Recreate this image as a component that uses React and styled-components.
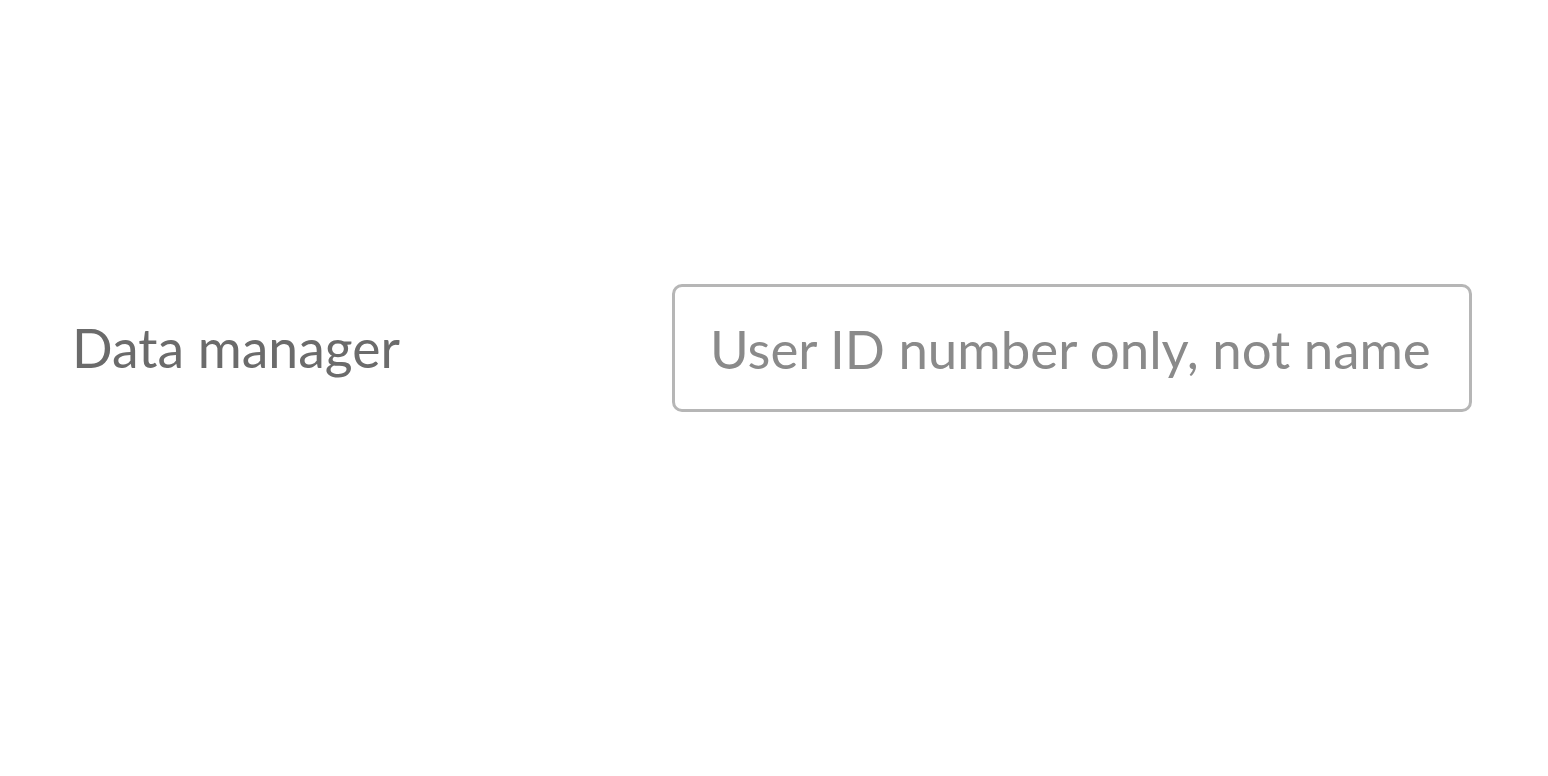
import React from "react";
import styled, { createGlobalStyle } from "styled-components";

const GlobalStyle = createGlobalStyle`
    html, body {
        margin: 0;
        padding: 0;
        background: #ffffff;
        font-family: "Lato", "Open Sans", sans-serif;
    }
`;

const Page = styled.div`
    width: 1548px;
    height: 776px;
    box-sizing: border-box;
    padding: 284px 76px 0 72px;
`;

const FieldRow = styled.div`
    display: grid;
    grid-template-columns: 600px 800px;
    align-items: center;
`;

const Label = styled.label`
    font-size: 53.5px;
    color: #6b6b6b;
    line-height: 1;
`;

const Input = styled.input`
    box-sizing: border-box;
    width: 800px;
    height: 128px;
    border: 3px solid #b6b6b6;
    border-radius: 10px;
    padding: 0 35px;
    font-family: inherit;
    font-size: 52.8px;
    color: #555;
    outline: none;

    &::placeholder {
        color: #8a8a8a;
    }
`;

export default function App() {
    return (
        <>
            <GlobalStyle />
            <Page>
                <FieldRow>
                    <Label htmlFor="data-manager">Data manager</Label>
                    <Input
                        id="data-manager"
                        placeholder="User ID number only, not name"
                    />
                </FieldRow>
            </Page>
        </>
    );
}
